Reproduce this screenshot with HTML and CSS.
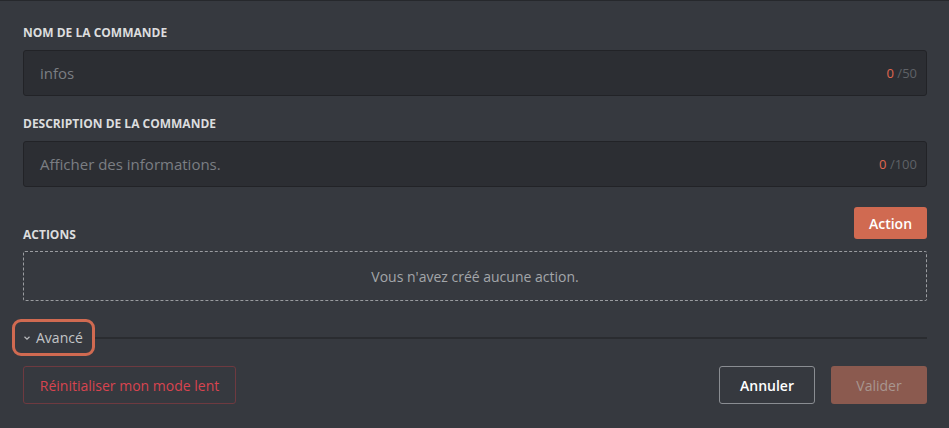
FILE: index.html
```html
<!DOCTYPE html>
<html lang="fr">
<head>
<meta charset="utf-8">
<title>Commande</title>
<link rel="stylesheet" href="styles.css">
</head>
<body>
<div class="panel">
  <div class="field">
    <div class="label">Nom de la commande</div>
    <div class="input">
      <span class="placeholder">infos</span>
      <span class="counter"><span class="count">0</span> /50</span>
    </div>
  </div>
  <div class="field">
    <div class="label">Description de la commande</div>
    <div class="input">
      <span class="placeholder">Afficher des informations.</span>
      <span class="counter"><span class="count">0</span> /100</span>
    </div>
  </div>
  <div class="actions-head">
    <div class="label">Actions</div>
    <button class="btn btn-action">Action</button>
  </div>
  <div class="empty">Vous n'avez créé aucune action.</div>
  <div class="advanced">
    <div class="adv-toggle">
      <svg class="chev" viewBox="0 0 8 6" width="8" height="6"><path d="M1.5 1.8 L4 4.2 L6.5 1.8" fill="none" stroke="#b9bbbe" stroke-width="1.2"/></svg>
      <span>Avancé</span>
    </div>
    <div class="adv-line"></div>
  </div>
  <div class="footer">
    <button class="btn btn-reset">Réinitialiser mon mode lent</button>
    <div class="footer-right">
      <button class="btn btn-cancel">Annuler</button>
      <button class="btn btn-submit">Valider</button>
    </div>
  </div>
</div>
</body>
</html>
```

FILE: styles.css
```css
html, body {
  margin: 0;
  padding: 0;
}
body {
  background: #36393f;
  border-top: 1px solid #26282c;
  font-family: "Open Sans", "Noto Sans", sans-serif;
  height: 427px;
  overflow: hidden;
}
.panel {
  padding: 24px 22px 0 23px;
}
.label {
  color: #dcddde;
  font-size: 12px;
  font-weight: 700;
  text-transform: uppercase;
  line-height: 16px;
}
.field {
  margin-bottom: 20px;
}
.field .label {
  margin-bottom: 9px;
}
.input {
  height: 44px;
  background: #2c2e33;
  border: 1px solid #222327;
  border-radius: 3px;
  display: flex;
  align-items: center;
  justify-content: space-between;
  padding: 0 9px 0 16px;
}
.placeholder {
  color: #7b7e83;
  font-size: 15px;
}
.counter {
  color: #5f6267;
  font-size: 13px;
}
.count {
  color: #e0674f;
}
.actions-head {
  display: flex;
  justify-content: space-between;
  align-items: flex-end;
}
.actions-head .label {
  margin-bottom: -4px;
}
.btn {
  font-family: "Open Sans", "Noto Sans", sans-serif;
  font-size: 14px;
  cursor: pointer;
  border-radius: 3px;
  box-sizing: border-box;
}
.btn-action {
  background: #d06a51;
  color: #ffffff;
  border: none;
  width: 73px;
  height: 32px;
  font-weight: 600;
  padding: 0;
}
.empty {
  margin-top: 12px;
  height: 50px;
  box-sizing: border-box;
  border: 1px dashed #9a9ca0;
  border-radius: 2px;
  display: flex;
  align-items: center;
  justify-content: center;
  color: #a3a6aa;
  font-size: 14px;
}
.advanced {
  display: flex;
  align-items: center;
  margin-top: 18px;
  margin-left: -11px;
}
.adv-toggle {
  display: flex;
  align-items: center;
  gap: 5px;
  border: 3px solid #d06a51;
  border-radius: 9px;
  height: 31px;
  padding: 0 9px 0 8px;
  color: #c3c5c8;
  font-size: 14px;
}
.chev {
  margin-top: 1px;
}
.adv-line {
  flex: 1;
  height: 2px;
  background: #2a2c30;
}
.footer {
  display: flex;
  justify-content: space-between;
  align-items: center;
  margin-top: 10px;
}
.footer-right {
  display: flex;
  gap: 16px;
}
.btn-reset {
  background: transparent;
  border: 1px solid #6e3a40;
  color: #d8444f;
  height: 38px;
  width: 213px;
  padding: 0;
}
.btn-cancel {
  background: transparent;
  border: 1px solid #8a8d92;
  color: #ffffff;
  font-weight: 600;
  height: 38px;
  width: 96px;
  padding: 0;
}
.btn-submit {
  background: #8b5a4f;
  border: none;
  color: #a8968f;
  height: 38px;
  width: 96px;
  padding: 0;
}
```
